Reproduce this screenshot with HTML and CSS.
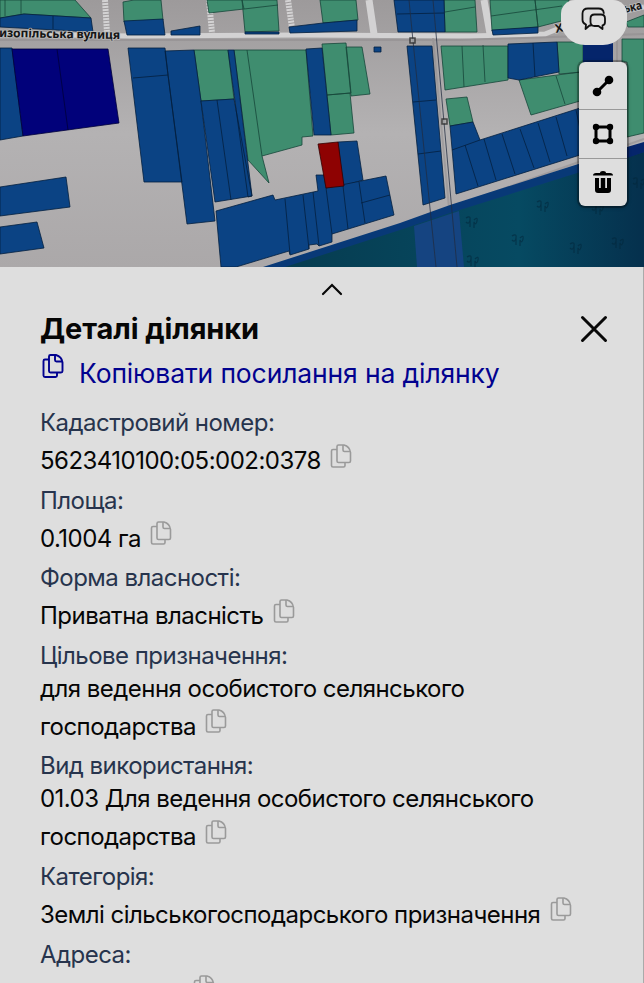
FILE: index.html
```html
<!DOCTYPE html>
<html lang="uk">
<head>
<meta charset="utf-8">
<title>Деталі ділянки</title>
<meta name="viewport" content="width=device-width,initial-scale=1.0">
<link rel="stylesheet" href="styles.css">
</head>

<body>
<!-- ===== Спрайт іконок ===== -->
<svg class="sprite" aria-hidden="true">
  <symbol id="copy" viewBox="0 0 24 28">
    <path d="M8 6.500H4a1.500 1.500 0 0 0-1.500 1.500v14.500a1.500 1.500 0 0 0 1.500 1.500h10.500a1.500 1.500 0 0 0 1.500-1.500V19.500"/>
    <path d="M9.500 2h5.500c3.800 1 6 4 6.500 7.500v8.500a1.500 1.500 0 0 1-1.500 1.500H9.500a1.500 1.500 0 0 1-1.500-1.500V3.500a1.500 1.500 0 0 1 1.500-1.500z"/>
    <path d="M14 2v5a1.500 1.500 0 0 0 1.500 1.500H21"/>
  </symbol>
</svg>

<!-- ===== Карта ===== -->
<section class="map">
  <svg class="map-canvas" viewBox="0 0 644 267">
    <defs>
      <linearGradient id="forest" x1="0" x2="1">
        <stop offset="0" stop-color="#063c50"/>
        <stop offset=".65" stop-color="#064a62"/>
        <stop offset="1" stop-color="#05304d"/>
      </linearGradient>
      <linearGradient id="ground" x1="0" y1="0" x2="0" y2="1">
        <stop offset="0" stop-color="#9d9a9b"/>
        <stop offset=".5" stop-color="#b4b2b3"/>
        <stop offset="1" stop-color="#aba8a9"/>
      </linearGradient>
    </defs>
    <rect width="644" height="267" fill="url(#ground)"/>

    <!-- дороги -->
    <g class="road">
      <path d="M0 34L130 36 300 35 470 36 545 34 575 22 644 7"/>
      <path class="lane" d="M369 0L374 34M484 0L490 34"/>
      <path class="steps" d="M105 0L107 33M209 0L212 33M288 0L292 28"/>
    </g>
    <path class="street" d="M0 40H460L644 34M433 38L449 208 644 139M617 38V70"/>

    <!-- ліс -->
    <path class="edge" d="M263 267L400 223 450 205 644 143V267z"/>
    <path d="M285 267L400 230 450 213 644 152V267z" fill="url(#forest)"/>
    <path d="M414 226L459 211 464 267H417z" fill="#154481"/>

    <g class="green">
      <path d="M0 0H75L91 18 24 14 0 18zM123 2L134 0H161L163 20 124 22zM207 0H242L244 9 209 13zM242 0H277L279 31 245 32zM320 0H356L358 20 323 23z"/>
      <path d="M244 9L278 5M5 0V16M21 0V14"/>
      <path d="M194 50H228L234 99 201 101zM234 50H306L313 136 302 137V145L262 156 269 183 248 160z"/>
      <path d="M247 50L262 156M322 44L346 43 351 93 327 95zM346 47H362L370 94 351 96zM327 95L350 93 354 133 331 135z"/>
      <path d="M444 0H475L477 32H445zM490 0H535L538 27 492 31zM535 0H569L565 20 538 27z"/>
      <path d="M445 12L475 7M491 16L562 6M441 46H508V80L445 90zM462 46L464 87M483 45L485 82"/>
      <path d="M557 42H583V72L559 74zM519 80L580 72V101L531 115zM556 76L565 104M446 99L467 97 473 122 450 126z"/>
      <path d="M622 39H644V133L627 137V62H622zM626 22L644 15V27H628z"/>
    </g>

    <g class="blue">
      <path d="M0 18L24 14 91 18 93 32 0 27zM53 16V29M124 21L163 19 165 35 127 35zM171 31L200 26V35H171zM245 32H279V34H245zM289 27L323 23 357 20V31L290 33z"/>
      <path d="M0 48H12L23 136 0 140zM0 187L66 177 70 207 0 216zM0 227L37 222 44 248 0 254z"/>
      <path d="M128 48H165L168 75 182 182H144zM133 78L168 75M165 51L194 50 201 101 215 221 187 224z"/>
      <path d="M201 101L234 99 252 196 215 202zM217 100L231 200M228 50H234L252 196 248 197zM306 49L322 48 331 135H314z"/>
      <path d="M374 47H381V52H374zM338 142L357 141 363 180 343 186z"/>
      <path d="M216 211L273 195 275 200 318 191 316 175H324L326 188 386 176 394 215 332 234V242L319 246 317 244 309 245V249L290 255 289 251 236 267H221z"/>
      <path d="M285 199L290 254M303 195L309 249M313 192L319 246M326 188L332 234M343 186L348 229M359 182L365 223M361 203L390 195"/>
      <path d="M394 0H444L445 32H398zM397 14L444 13M492 30L538 27V33L493 35z"/>
      <path d="M407 46H432L445 198 423 205zM413 102L436 100M418 154L441 151"/>
      <path d="M508 44L557 42 559 72 519 80 508 78zM533 43L535 77"/>
      <path d="M450 126L473 122 480 140 580 108V155L456 194zM452 150L480 140M465 145L478 186M484 139L496 180M502 134L515 174M520 129L534 168M538 123L550 162M556 117L567 156M576 110L584 148"/>
    </g>
    <path d="M583 43H613V66H583z" fill="#05256b"/>
    <path d="M627 147L644 142V152L627 158z" fill="#05256b"/>
    <path class="navy" d="M12 49H108L119 123 23 136zM57 49L68 130"/>
    <path class="red" d="M318 144L338 142 344 186 326 188z"/>

    <!-- лінії електропередач -->
    <g class="wire">
      <path d="M409 0L413 41 436 267M433 0L457 267"/>
      <path class="pylon" d="M410 38h5v5h-5zM442 119h5v5h-5z"/>
    </g>

    <g class="trees">
      <path id="tree" d="M466 218q5-3 4 2t-4 2m4-3v8m4-7q4-4 3 1t-3 1v6"/>
      <use href="#tree" x="71" y="-16"/>
      <use href="#tree" x="46" y="18"/>
      <use href="#tree" x="104" y="26"/>
      <use href="#tree" x="146" y="21"/>
      <use href="#tree" x="126" y="-13"/>
      <use href="#tree" x="1" y="39"/>
      <use href="#tree" x="167" y="-39"/>
    </g>

    <g class="street-name">
      <text x="-1" y="37" transform="rotate(1 0 37)" textLength="121">изопільська вулиця</text>
      <text x="556" y="33" transform="rotate(-12 556 33)">Х</text>
      <text x="625" y="13" transform="rotate(-13 625 13)" textLength="18" lengthAdjust="spacingAndGlyphs">ька</text>
    </g>
  </svg>

  <div class="map-controls">
    <button class="chat" aria-label="Чат">
      <svg viewBox="0 0 28 26">
        <path d="M11 19.500H9.500l-4 3.500 .500-4.500C3.500 17.500 2.500 16 2.500 14V7.500C2.500 4 4.500 2.500 8 2.500h10.500c3.200 0 5 1.500 5.300 4.500"/>
        <path d="M14.500 8.500h6.500c2.500 0 4 1.400 4 4V16c0 2-1 3.200-2.500 3.500v3.500L18.500 20h-4c-2.500 0-4-1.400-4-4v-3.500c0-2.600 1.500-4 4-4z"/>
      </svg>
    </button>
    <div class="tools">
      <button aria-label="Лінія">
        <svg viewBox="0 0 22 22"><path d="M5 17L17 5" stroke="#000" stroke-width="3"/><circle cx="5" cy="17" r="4.300"/><circle cx="17" cy="5" r="4.300"/></svg>
      </button>
      <button aria-label="Полігон">
        <svg viewBox="0 0 22 22"><path d="M4 4h14v14H4z" fill="none" stroke="#000" stroke-width="3"/><circle cx="4" cy="4" r="3.200"/><circle cx="18" cy="4" r="3.200"/><circle cx="4" cy="18" r="3.200"/><circle cx="18" cy="18" r="3.200"/></svg>
      </button>
      <button aria-label="Видалити">
        <svg viewBox="0 0 22 24"><path d="M1 5.500Q1 3 4 3h4q0-2 3-2t3 2h4q3 0 3 2.500z"/><path fill-rule="evenodd" d="M3 8h16v12q0 3-3 3H6q-3 0-3-3zM7 8v10h1.800V8zM13.200 8v10H15V8z"/></svg>
      </button>
    </div>
  </div>
</section>

<!-- ===== Панель деталей ===== -->
<main class="details">
  <button class="expand" aria-label="Розгорнути">
    <svg viewBox="0 0 22 14"><path d="M2 12l9-9 9 9"/></svg>
  </button>
  <header>
    <h1>Деталі ділянки</h1>
    <button class="close" aria-label="Закрити">
      <svg viewBox="0 0 28 28"><path d="M2.500 2.500l23 23M25.500 2.500l-23 23"/></svg>
    </button>
  </header>
  <a class="copy-link"><svg class="copy"><use href="#copy"/></svg><span>Копіювати посилання на ділянку</span></a>

  <dl>
    <dt>Кадастровий номер:</dt>
    <dd>5623410100:05:002:0378 <svg class="copy"><use href="#copy"/></svg></dd>
    <dt>Площа:</dt>
    <dd>0.1004 га <svg class="copy"><use href="#copy"/></svg></dd>
    <dt>Форма власності:</dt>
    <dd>Приватна власність <svg class="copy"><use href="#copy"/></svg></dd>
    <dt>Цільове призначення:</dt>
    <dd>для ведення особистого селянського господарства <svg class="copy"><use href="#copy"/></svg></dd>
    <dt>Вид використання:</dt>
    <dd>01.03 Для ведення особистого селянського господарства <svg class="copy"><use href="#copy"/></svg></dd>
    <dt>Категорія:</dt>
    <dd>Землі сільськогосподарського призначення <svg class="copy"><use href="#copy"/></svg></dd>
    <dt>Адреса:</dt>
    <dd>не визначені <svg class="copy"><use href="#copy"/></svg></dd>
  </dl>
</main>
</body>
</html>
```
FILE: styles.css
```css
/* ==== Reset ==== */
*,*::before,*::after{box-sizing:border-box;margin:0;padding:0}
html,body{width:100%;height:100%;overflow:hidden}
body{
  display:flex;flex-direction:column;
  font-family:Inter,"Liberation Sans",sans-serif;
  background:#dedede;color:#060606;
}
button{border:0;background:none;display:flex;align-items:center;justify-content:center;cursor:pointer}
.sprite{position:absolute;width:0;height:0}

/* ==== Карта ==== */
.map{position:relative;flex:none;height:267px;overflow:hidden}
.map-canvas{display:block;width:644px;height:267px}

.road path{fill:none;stroke:#d3d2d3;stroke-width:5}
.road .lane{stroke-width:7}
.road .steps{stroke-width:6;stroke-dasharray:2 1}
.street{fill:none;stroke:#8d8a8b;stroke-width:2;opacity:.5}
.edge{fill:#083977}
.green path{fill:#3f8d6f;stroke:#17463a;stroke-width:.8}
.blue path{fill:#0b4384;stroke:#04203f;stroke-width:.8}
.navy{fill:#01017a;stroke:#00003a;stroke-width:.8}
.red{fill:#8e0202;stroke:#300;stroke-width:.8}
.wire path{fill:none;stroke:#222c40;stroke-width:1;opacity:.75}
.wire .pylon{stroke:#222;stroke-width:1.5;fill:#aaa}
.trees{fill:none;stroke:#04283c;stroke-width:1.2;opacity:.6}
.street-name{
  font:700 12px "Noto Sans",sans-serif;fill:#151515;
  stroke:#bbb;stroke-width:1.5;paint-order:stroke;
}

/* ==== Кнопки на карті ==== */
.map-controls{
  position:absolute;top:0;right:17px;
  display:flex;flex-direction:column;align-items:flex-end;gap:17px;
}
.chat{
  width:66px;height:45px;padding-bottom:7px;
  background:#dedede;border-radius:14px 14px 24px 24px;
}
.chat svg{width:28px;height:26px;fill:none;stroke:#111;stroke-width:1.8;stroke-linejoin:round;stroke-linecap:round}
.tools{
  width:48px;height:144px;
  display:flex;flex-direction:column;
  background:#dedede;border-radius:6px;
  box-shadow:0 0 0 2px rgba(0,0,0,.25),0 1px 4px rgba(0,0,0,.4);
}
.tools button{flex:1}
.tools button + button{border-top:1px solid #999}
.tools svg{width:22px;height:24px}

/* ==== Панель ==== */
.details{
  flex:1;min-height:0;overflow:hidden;
  padding:13px 35px 0 40px;
  border-right:1px solid #aaa;
}
.expand{width:22px;height:18px;margin:0 0 0 281px}
.expand svg{width:22px;height:14px}
.expand svg,.close svg{fill:none;stroke:#080808;stroke-width:2.2;stroke-linecap:round}
header{display:flex;justify-content:space-between;align-items:center;height:36px;margin-top:13px}
h1{font-size:29px;font-weight:700;line-height:36px;letter-spacing:-.1px}
.close svg{width:28px;height:28px;stroke-width:3}

.copy{
  width:24px;height:28px;
  fill:none;stroke:#9a9a9a;stroke-width:1.6;stroke-linejoin:round;
}
.copy-link{display:flex;gap:14px;height:47px;color:#02028f;font-size:26.500px;line-height:52px;letter-spacing:-.13px}
.copy-link .copy{margin:6px 0 0 1px;stroke:currentColor;stroke-width:1.9}

dl{margin-top:12px;font-size:24px;line-height:33px;letter-spacing:-.53px}
dt{color:#27344d}
dd{margin-bottom:7.100px}
dd .copy{vertical-align:-2px;margin:3.500px 0 0 2px}
```
